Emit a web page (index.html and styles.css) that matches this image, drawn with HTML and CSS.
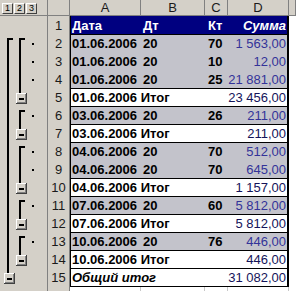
FILE: index.html
```html
<!DOCTYPE html>
<html lang="ru">
<head>
<meta charset="utf-8">
<title>Итоги по датам</title>
<link rel="stylesheet" href="styles.css">
</head>
<body>
<div class="sheet">
  <div class="gutter">
    <div class="levels"><span class="lvl">1</span><span class="lvl">2</span><span class="lvl">3</span></div>
    <svg class="outline" width="47" height="275" viewBox="0 16 47 275">
      <defs>
        <symbol id="minus" viewBox="0 0 11 11" width="11" height="11">
          <rect width="11" height="11" fill="#404040"/>
          <rect width="10" height="10" fill="#ffffff"/>
          <rect x="1" y="1" width="9" height="9" fill="#808080"/>
          <rect x="1" y="1" width="8" height="8" fill="#d4d0c8"/>
          <rect x="3" y="5" width="5" height="2" fill="#000000"/>
        </symbol>
      </defs>
      <g fill="#000">
        <!-- level 1 -->
        <rect x="7" y="38" width="2" height="235"/>
        <rect x="7" y="38" width="6" height="2"/>
        <!-- level 2 -->
        <rect x="19" y="38" width="2" height="55"/>
        <rect x="19" y="38" width="6" height="2"/>
        <rect x="19" y="110" width="2" height="19"/>
        <rect x="19" y="110" width="6" height="2"/>
        <rect x="19" y="146" width="2" height="37"/>
        <rect x="19" y="146" width="6" height="2"/>
        <rect x="19" y="200" width="2" height="19"/>
        <rect x="19" y="200" width="6" height="2"/>
        <rect x="19" y="236" width="2" height="19"/>
        <rect x="19" y="236" width="6" height="2"/>
        <!-- level 3 detail marks -->
        <rect x="32" y="43" width="2" height="2"/>
        <rect x="32" y="61" width="2" height="2"/>
        <rect x="32" y="79" width="2" height="2"/>
        <rect x="32" y="115" width="2" height="2"/>
        <rect x="32" y="151" width="2" height="2"/>
        <rect x="32" y="169" width="2" height="2"/>
        <rect x="32" y="205" width="2" height="2"/>
        <rect x="32" y="241" width="2" height="2"/>
      </g>
      <use href="#minus" x="16" y="93"/>
      <use href="#minus" x="16" y="129"/>
      <use href="#minus" x="16" y="183"/>
      <use href="#minus" x="16" y="219"/>
      <use href="#minus" x="16" y="255"/>
      <use href="#minus" x="4" y="273"/>
    </svg>
  </div>

  <div class="grid">
    <div class="row colhead">
      <div class="ch corner"></div>
      <div class="ch">A</div>
      <div class="ch">B</div>
      <div class="ch">C</div>
      <div class="ch">D</div>
      <div class="ch"></div>
    </div>

    <div class="row title">
      <div class="rh">1</div>
      <div class="rec"><span class="a">Дата</span><span class="b">Дт</span><span class="c">Кт</span><span class="d">Сумма</span></div>
      <div class="e"></div>
    </div>

    <div class="row det">
      <div class="rh">2</div>
      <div class="rec thin"><span class="a">01.06.2006</span><span class="b">20</span><span class="c">70</span><span class="d">1 563,00</span></div>
      <div class="e"></div>
    </div>
    <div class="row det">
      <div class="rh">3</div>
      <div class="rec thin"><span class="a">01.06.2006</span><span class="b">20</span><span class="c">10</span><span class="d">12,00</span></div>
      <div class="e"></div>
    </div>
    <div class="row det">
      <div class="rh">4</div>
      <div class="rec"><span class="a">01.06.2006</span><span class="b">20</span><span class="c">25</span><span class="d">21 881,00</span></div>
      <div class="e"></div>
    </div>
    <div class="row sum">
      <div class="rh">5</div>
      <div class="rec"><span class="a label">01.06.2006 Итог</span><span class="d">23 456,00</span></div>
      <div class="e"></div>
    </div>

    <div class="row det">
      <div class="rh">6</div>
      <div class="rec"><span class="a">03.06.2006</span><span class="b">20</span><span class="c">26</span><span class="d">211,00</span></div>
      <div class="e"></div>
    </div>
    <div class="row sum">
      <div class="rh">7</div>
      <div class="rec"><span class="a label">03.06.2006 Итог</span><span class="d">211,00</span></div>
      <div class="e"></div>
    </div>

    <div class="row det">
      <div class="rh">8</div>
      <div class="rec thin"><span class="a">04.06.2006</span><span class="b">20</span><span class="c">70</span><span class="d">512,00</span></div>
      <div class="e"></div>
    </div>
    <div class="row det">
      <div class="rh">9</div>
      <div class="rec"><span class="a">04.06.2006</span><span class="b">20</span><span class="c">70</span><span class="d">645,00</span></div>
      <div class="e"></div>
    </div>
    <div class="row sum">
      <div class="rh">10</div>
      <div class="rec"><span class="a label">04.06.2006 Итог</span><span class="d">1 157,00</span></div>
      <div class="e"></div>
    </div>

    <div class="row det">
      <div class="rh">11</div>
      <div class="rec"><span class="a">07.06.2006</span><span class="b">20</span><span class="c">60</span><span class="d">5 812,00</span></div>
      <div class="e"></div>
    </div>
    <div class="row sum">
      <div class="rh">12</div>
      <div class="rec"><span class="a label">07.06.2006 Итог</span><span class="d">5 812,00</span></div>
      <div class="e"></div>
    </div>

    <div class="row det">
      <div class="rh">13</div>
      <div class="rec"><span class="a">10.06.2006</span><span class="b">20</span><span class="c">76</span><span class="d">446,00</span></div>
      <div class="e"></div>
    </div>
    <div class="row sum">
      <div class="rh">14</div>
      <div class="rec"><span class="a label">10.06.2006 Итог</span><span class="d">446,00</span></div>
      <div class="e"></div>
    </div>

    <div class="row sum grand">
      <div class="rh">15</div>
      <div class="rec"><span class="a label">Общий итог</span><span class="d">31 082,00</span></div>
      <div class="e"></div>
    </div>

    <div class="row empty">
      <div class="rh">16</div>
      <div class="rec blank"><span></span><span></span><span></span><span></span></div>
      <div class="e"></div>
    </div>
  </div>
</div>
</body>
</html>
```

FILE: styles.css
```css
* {
  box-sizing: border-box;
  margin: 0;
  padding: 0;
}

html, body {
  width: 296px;
  height: 291px;
  overflow: hidden;
  background: #ffffff;
}

body {
  font-family: "Liberation Sans", Arial, sans-serif;
  font-size: 13px;
  color: #000;
}

.sheet {
  display: flex;
  height: 291px;
}

/* outline gutter with level buttons and group brackets */
.gutter {
  width: 47px;
  flex: none;
  background: #d4d0c8;
  display: flex;
  flex-direction: column;
}

.levels {
  height: 16px;
  flex: none;
  display: flex;
  gap: 1px;
  padding: 3px 0 0 2px;
  border-bottom: 1px solid #808080;
}

.lvl {
  width: 11px;
  height: 11px;
  border: 1px solid;
  border-color: #ffffff #404040 #404040 #ffffff;
  background: #d4d0c8;
  font-size: 9px;
  line-height: 9px;
  text-align: center;
  color: #000;
}

.outline {
  display: block;
  flex: none;
}

/* worksheet grid */
.grid {
  flex: 1;
  display: flex;
  flex-direction: column;
  min-width: 0;
}

.row {
  flex: none;
  display: grid;
  grid-template-columns: 23px 219px 1fr;
  height: 18px;
  line-height: 18px;
}

.row.colhead {
  grid-template-columns: 23px 71px 64px 23px 61px 1fr;
  height: 16px;
  line-height: 15px;
}

.row.title {
  height: 19px;
  line-height: 19px;
}

.ch {
  background: #d4d0c8;
  border-right: 1px solid #808080;
  border-bottom: 1px solid #808080;
  text-align: center;
  color: #1a1a1a;
}

.ch.corner {
  border-left: 1px solid #808080;
}

.rh {
  background: #d4d0c8;
  border-left: 1px solid #808080;
  border-right: 1px solid #808080;
  border-bottom: 1px solid #a0a0a0;
  text-align: center;
  color: #1a1a1a;
}

.e {
  background: #ffffff;
  border-bottom: 1px solid #c8c8c8;
}

/* table block A:D */
.rec {
  display: grid;
  grid-template-columns: 71px 64px 23px 61px;
  font-weight: bold;
  white-space: nowrap;
  box-shadow: inset 1px 0 #000, inset -2px 0 #000, inset 0 -2px #000;
}

.rec.thin {
  box-shadow: inset 1px 0 #000, inset -2px 0 #000, inset 0 -1px #000;
}

.rec.blank {
  box-shadow: none;
  background: #fff;
}

.rec.blank span {
  border-right: 1px solid #c8c8c8;
}

.a { padding-left: 2px; }
.b { padding-left: 2px; }
.c { padding-left: 3px; }

.label {
  grid-column: 1 / 4;
}

.d {
  grid-column: 4;
  text-align: right;
  padding-right: 3px;
  font-weight: normal;
  color: #333399;
}

.title .rec {
  background: #000080;
  color: #ffffff;
}

.title .d {
  color: #ffffff;
  font-weight: bold;
  font-style: italic;
}

.det .rec {
  background: #c3c3cb;
}

.sum .rec {
  background: #ffffff;
}

.sum .d {
  color: #14145a;
}

.grand .label {
  font-style: italic;
}
```
